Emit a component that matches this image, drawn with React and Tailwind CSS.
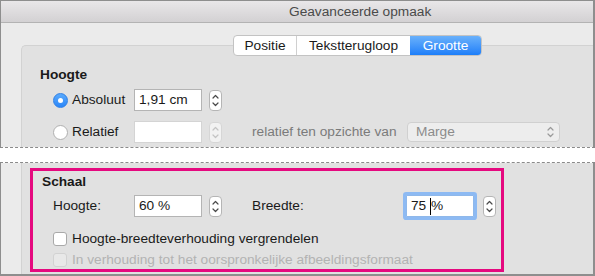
import React from 'react'

function Stepper({ disabled = false, className = '' }) {
  const stroke = disabled ? '#c4c4c4' : '#4a4a4a'
  return (
    <div className={`w-[13px] h-[21px] rounded-[4px] border ${disabled ? 'border-[#d6d6d6] bg-[#f2f2f2]' : 'border-[#b5b5b5] bg-white'} flex items-center justify-center ${className}`}>
      <svg width="11" height="19" viewBox="0 0 11 19" fill="none">
        <path d="M3 7 L5.5 4.5 L8 7" stroke={stroke} strokeWidth="1.2" strokeLinecap="round" strokeLinejoin="round" />
        <path d="M3 12 L5.5 14.5 L8 12" stroke={stroke} strokeWidth="1.2" strokeLinecap="round" strokeLinejoin="round" />
      </svg>
    </div>
  )
}

function Radio({ checked }) {
  if (checked) {
    return (
      <div className="w-[15px] h-[15px] rounded-full bg-gradient-to-b from-[#5aaafc] to-[#2a86f8] border border-[#2f80e6] flex items-center justify-center">
        <div className="w-[5px] h-[5px] rounded-full bg-white" />
      </div>
    )
  }
  return <div className="w-[15px] h-[15px] rounded-full bg-white border border-[#b0b0b0]" />
}

function Checkbox({ disabled = false }) {
  return (
    <div className={`w-[14px] h-[14px] rounded-[3px] border ${disabled ? 'border-[#d2d2d2] bg-[#e8e8e8]' : 'border-[#a9a9a9] bg-white'}`} />
  )
}

export default function App() {
  return (
    <div className="w-[595px] h-[276px] overflow-hidden bg-white font-['Liberation_Sans',Arial,sans-serif] text-[13.7px] text-[#1a1a1a]">
      {/* Upper half */}
      <div className="h-[148px] border-b border-dashed border-[#8a8a8a]">
        <div className="h-full border-l border-r-2 border-t border-[#8e8e8e] flex flex-col">
          <div className="h-[22px] border-b border-[#b3b3b3] bg-gradient-to-b from-[#e9e7e9] to-[#d3d1d3] flex items-center pl-[288px] text-[#4a4a4a] leading-none">
            Geavanceerde opmaak
          </div>
          <div className="flex-1 bg-[#ebebeb] pt-[12px] flex flex-col">
            <div className="relative z-10 ml-[232px] h-[21px] flex w-fit rounded-[4px] border border-[#c3c3c3] bg-white overflow-hidden leading-none">
              <div className="w-[63px] flex items-center justify-center border-r border-[#d0d0d0]">Positie</div>
              <div className="w-[113px] flex items-center justify-center">Tekstterugloop</div>
              <div className="w-[71px] flex items-center justify-center bg-gradient-to-b from-[#69b1fb] to-[#1b7ef9] text-white">Grootte</div>
            </div>
            <div className="flex-1 -mt-[11px] ml-[20px] border-t border-l border-[#d2d2d2] rounded-tl-[5px] bg-[#e1e1e1] pt-[21px] pl-[18px]">
              <div className="h-[16px] leading-[16px] font-bold">Hoogte</div>
              <div className="mt-[6px] ml-[13px] h-[22px] flex items-center">
                <Radio checked />
                <div className="ml-[4px] w-[62px]">Absoluut</div>
                <div className="w-[68px] h-[22px] border border-[#b4b4b4] bg-white flex items-center pl-[4px]">1,91 cm</div>
                <Stepper className="ml-[7px]" />
              </div>
              <div className="mt-[10px] ml-[13px] h-[22px] flex items-center">
                <Radio checked={false} />
                <div className="ml-[4px] w-[62px]">Relatief</div>
                <div className="w-[68px] h-[22px] border border-[#d4d4d4] bg-white" />
                <Stepper disabled className="ml-[7px]" />
                <div className="ml-[30px] w-[155px] text-[#7b7b7b]">relatief ten opzichte van</div>
                <div className="w-[153px] h-[20px] rounded-[4px] border border-[#d0d0d0] bg-[#ededed] flex items-center justify-between pl-[8px] pr-[4px] text-[#8b8b8b]">
                  <span>Marge</span>
                  <svg width="9" height="14" viewBox="0 0 9 14" fill="none">
                    <path d="M2 5 L4.5 2.5 L7 5" stroke="#9a9a9a" strokeWidth="1.2" strokeLinecap="round" strokeLinejoin="round" />
                    <path d="M2 9 L4.5 11.5 L7 9" stroke="#9a9a9a" strokeWidth="1.2" strokeLinecap="round" strokeLinejoin="round" />
                  </svg>
                </div>
              </div>
            </div>
          </div>
        </div>
      </div>

      {/* Gap */}
      <div className="h-[14px] bg-white" />

      {/* Lower half */}
      <div className="h-[114px] border-t border-dashed border-[#8a8a8a]">
        <div className="h-full border-l border-r-2 border-b-2 border-[#8e8e8e] bg-[#ebebeb] flex">
          <div className="flex-1 ml-[20px] border-l border-[#d2d2d2] bg-[#e1e1e1] pt-[5px] pl-[8px]">
            <div className="w-[474px] h-[104px] border-[3px] border-[#e5097f] pt-[3px] pl-[9px]">
              <div className="h-[16px] leading-[16px] font-bold">Schaal</div>
              <div className="mt-[5px] ml-[11px] h-[22px] flex items-center">
                <div className="w-[81px]">Hoogte:</div>
                <div className="w-[68px] h-[22px] border border-[#b4b4b4] bg-white flex items-center pl-[4px]">60 %</div>
                <Stepper className="ml-[7px]" />
                <div className="ml-[30px] w-[154px]">Breedte:</div>
                <div className="w-[68px] h-[22px] border border-[#8fb8ea] bg-white ring-[3px] ring-[#8dbaf3] rounded-[1px] flex items-center pl-[4px]">
                  <span>75&nbsp;</span>
                  <span className="w-px h-[17px] bg-black" />
                  <span>%</span>
                </div>
                <Stepper className="ml-[9px]" />
              </div>
              <div className="mt-[14px] ml-[11px] h-[16px] flex items-center">
                <Checkbox />
                <span className="ml-[5px]">Hoogte-breedteverhouding vergrendelen</span>
              </div>
              <div className="mt-[5px] ml-[11px] h-[16px] flex items-center">
                <Checkbox disabled />
                <span className="ml-[5px] text-[#b3b3b3]">In verhouding tot het oorspronkelijke afbeeldingsformaat</span>
              </div>
            </div>
          </div>
        </div>
      </div>
    </div>
  )
}
